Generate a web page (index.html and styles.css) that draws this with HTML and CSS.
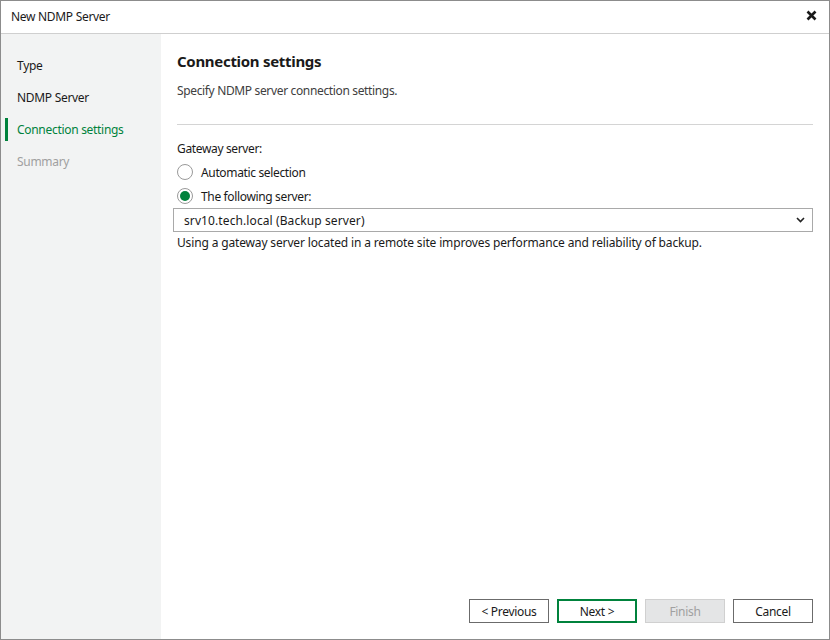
FILE: index.html
```html
<!DOCTYPE html>
<html>
<head>
<meta charset="utf-8">
<link rel="stylesheet" href="styles.css">
</head>
<body>
<div class="window">
  <div class="titlebar">
    <span class="title">New NDMP Server</span>
    <span class="close" aria-label="Close">
      <svg width="11" height="11" viewBox="0 0 11 11"><path d="M1.5 1.5 L9.5 9.5 M9.5 1.5 L1.5 9.5" stroke="#1a1a1a" stroke-width="2.6" stroke-linecap="butt"/></svg>
    </span>
  </div>
  <div class="content">
    <nav class="sidebar">
      <div class="step">Type</div>
      <div class="step">NDMP Server</div>
      <div class="step active">Connection settings</div>
      <div class="step disabled">Summary</div>
    </nav>
    <main class="main">
      <h1 class="heading">Connection settings</h1>
      <p class="subtitle">Specify NDMP server connection settings.</p>
      <div class="separator"></div>
      <div class="form">
        <div class="label">Gateway server:</div>
        <label class="radio-row"><span class="radio"></span><span>Automatic selection</span></label>
        <label class="radio-row"><span class="radio checked"></span><span>The following server:</span></label>
        <div class="select">
          <span>srv10.tech.local (Backup server)</span>
          <svg class="chevron" width="9" height="6" viewBox="0 0 9 6"><path d="M1 1 L4.5 4.5 L8 1" fill="none" stroke="#222" stroke-width="1.6"/></svg>
        </div>
        <div class="help">Using a gateway server located in a remote site improves performance and reliability of backup.</div>
      </div>
      <div class="spacer"></div>
      <div class="buttons">
        <button class="btn">&lt; Previous</button>
        <button class="btn primary">Next &gt;</button>
        <button class="btn" disabled>Finish</button>
        <button class="btn">Cancel</button>
      </div>
    </main>
  </div>
</div>
</body>
</html>
```
FILE: styles.css
```css
* { box-sizing: border-box; }
html, body { margin: 0; padding: 0; }
body {
  width: 830px;
  height: 640px;
  font-family: "Noto Sans", "Open Sans", sans-serif;
  font-size: 12px;
  color: #1a1a1a;
  background: #fff;
}
.window {
  width: 830px;
  height: 640px;
  border: 1px solid #8c8c8c;
  display: flex;
  flex-direction: column;
  overflow: hidden;
}
.titlebar {
  height: 33px;
  flex: none;
  border-bottom: 1px solid #cfcfcf;
  display: flex;
  align-items: center;
  justify-content: space-between;
  padding: 0 12px 1px 10px;
}
.title { font-size: 12px; color: #1a1a1a; letter-spacing: -0.3px; }
.close { display: flex; align-items: center; width: 11px; height: 11px; margin-top: -3px; }
.content { flex: 1; display: flex; min-height: 0; }
.sidebar {
  width: 160px;
  flex: none;
  background: #f2f3f3;
  padding-top: 15px;
}
.step {
  height: 32px;
  display: flex;
  align-items: center;
  padding-left: 16px;
  position: relative;
  letter-spacing: -0.3px;
  color: #1a1a1a;
}
.step.active { color: #00823c; }
.step.active::before {
  content: "";
  position: absolute;
  left: 4px;
  top: 5px;
  width: 3px;
  height: 23px;
  background: #00823c;
}
.step.disabled { color: #a0a0a0; }
.main {
  flex: 1;
  display: flex;
  flex-direction: column;
  padding: 17px 16px 16px 16px;
}
.heading {
  margin: 0;
  font-size: 15px;
  line-height: 20px;
  font-weight: 700;
  letter-spacing: -0.3px;
  color: #1a1a1a;
}
.subtitle {
  margin: 11px 0 0 0;
  line-height: 18px;
  color: #404040;
  letter-spacing: -0.35px;
}
.separator {
  height: 1px;
  background: #d4d4d4;
  margin-top: 24px;
}
.form { padding-top: 15px; }
.label { line-height: 18px; letter-spacing: -0.35px; }
.radio-row {
  display: flex;
  align-items: center;
  gap: 8px;
  height: 24px;
  letter-spacing: -0.35px;
}
.radio-row:first-of-type { margin-top: 2px; }
.radio {
  width: 16px;
  height: 16px;
  border-radius: 50%;
  border: 1px solid #9a9a9a;
  background: #fff;
  display: flex;
  align-items: center;
  justify-content: center;
}
.radio.checked::after {
  content: "";
  width: 10px;
  height: 10px;
  border-radius: 50%;
  background: #00823c;
}
.select {
  margin: 0 0 0 -4px;
  height: 24px;
  border: 1px solid #a9a9a9;
  display: flex;
  align-items: center;
  justify-content: space-between;
  padding: 0 7px 0 10px;
  letter-spacing: 0.1px;
}
.select .chevron { display: block; }
.help {
  margin-top: 2px;
  line-height: 18px;
  letter-spacing: -0.15px;
}
.spacer { flex: 1; }
.buttons {
  display: flex;
  justify-content: flex-end;
  gap: 8px;
}
.btn {
  width: 80px;
  height: 24px;
  font-family: inherit;
  font-size: 12px;
  letter-spacing: -0.3px;
  color: #1a1a1a;
  background: #fff;
  border: 1px solid #6b6b6b;
  padding: 0;
  margin: 0;
}
.btn.primary { border: 2px solid #00823c; }
.btn:disabled {
  background: #e4e5e6;
  border-color: #d0d0d0;
  color: #a0a0a0;
}
```
